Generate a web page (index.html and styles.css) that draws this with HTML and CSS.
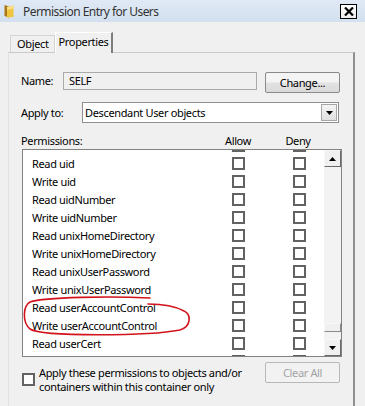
FILE: index.html
```html
<!DOCTYPE html>
<html lang="en">
<head>
  <meta charset="UTF-8" />
  <title>Permission Entry for Users</title>
  <link rel="stylesheet" href="styles.css">
</head>
<body>

  <div class="dialog">

    <div class="title-bar">
      <svg class="folder" width="10" height="14" viewBox="0 0 10 14">
        <path d="M0.5 1 L5 2.5 L5 13.5 L0.5 12 Z" fill="#a9761a"/>
        <path d="M3 3 L9.5 1.5 L9.5 13 L3 13.5 Z" fill="#f0c540"/>
        <path d="M3 3 L9.5 1.5 L9.5 4.5 L3 6 Z" fill="#fbe08a"/>
      </svg>
      <div class="title">Permission Entry for Users</div>
      <div class="close">
        <svg width="10" height="9" viewBox="0 0 10 9">
          <path d="M1 0.5 L9 8.5 M9 0.5 L1 8.5" stroke="#000" stroke-width="2.2"/>
        </svg>
      </div>
    </div>

    <div class="tab-bar">
      <div class="tab">Object</div>
      <div class="tab active">Properties</div>
    </div>

    <div class="panel">

      <div class="field-row">
        <div class="label name-label">Name:</div>
        <div class="textbox">SELF</div>
        <div class="button">Change...</div>
      </div>

      <div class="field-row apply-row">
        <div class="label apply-label">Apply to:</div>
        <div class="combo">
          <span>Descendant User objects</span>
          <span class="combo-btn">
            <svg width="7" height="4" viewBox="0 0 7 4"><path d="M0 0 H7 L3.5 4 Z" fill="#000"/></svg>
          </span>
        </div>
      </div>

      <div class="perm-head">
        <span>Permissions:</span>
        <span class="col-head">Allow</span>
        <span></span>
        <span class="col-head">Deny</span>
      </div>

      <div class="list">
        <div class="rows">
          <div class="rows-inner">
            <div class="perm-row"><span></span><span class="cb"></span><span></span><span class="cb"></span></div>
            <div class="perm-row"><span>Read uid</span><span class="cb"></span><span></span><span class="cb"></span></div>
            <div class="perm-row"><span>Write uid</span><span class="cb"></span><span></span><span class="cb"></span></div>
            <div class="perm-row"><span>Read uidNumber</span><span class="cb"></span><span></span><span class="cb"></span></div>
            <div class="perm-row"><span>Write uidNumber</span><span class="cb"></span><span></span><span class="cb"></span></div>
            <div class="perm-row"><span>Read unixHomeDirectory</span><span class="cb"></span><span></span><span class="cb"></span></div>
            <div class="perm-row"><span>Write unixHomeDirectory</span><span class="cb"></span><span></span><span class="cb"></span></div>
            <div class="perm-row"><span>Read unixUserPassword</span><span class="cb"></span><span></span><span class="cb"></span></div>
            <div class="perm-row"><span>Write unixUserPassword</span><span class="cb"></span><span></span><span class="cb"></span></div>
            <div class="perm-row"><span>Read userAccountControl</span><span class="cb"></span><span></span><span class="cb"></span></div>
            <div class="perm-row"><span>Write userAccountControl</span><span class="cb"></span><span></span><span class="cb"></span></div>
            <div class="perm-row"><span>Read userCert</span><span class="cb"></span><span></span><span class="cb"></span></div>
            <div class="perm-row"><span></span><span class="cb"></span><span></span><span class="cb"></span></div>
          </div>
        </div>
        <div class="scrollbar">
          <div class="sb-btn">
            <svg width="7" height="4" viewBox="0 0 7 4"><path d="M0 4 H7 L3.5 0 Z" fill="#000"/></svg>
          </div>
          <div class="sb-track"><div class="sb-thumb"></div></div>
          <div class="sb-btn">
            <svg width="7" height="4" viewBox="0 0 7 4"><path d="M0 0 H7 L3.5 4 Z" fill="#000"/></svg>
          </div>
        </div>
      </div>

      <div class="bottom-row">
        <span class="cb apply-cb"></span>
        <div class="apply-text">Apply these permissions to objects and/or<br>containers within this container only</div>
        <div class="button disabled">Clear All</div>
      </div>

    </div>
  </div>

  <!-- red pen mark over the screenshot -->
  <svg class="scribble" width="365" height="406" viewBox="0 0 365 406">
    <path d="M150 298 C 110 296, 45 297, 30 302 C 23 306, 22 322, 30 329 C 42 337, 150 336, 180 330 C 192 326, 191 314, 184 311 C 175 306, 160 304, 148 304"
          fill="none" stroke="#d3131b" stroke-width="1.6" stroke-linecap="round"/>
  </svg>

</body>
</html>
```

FILE: styles.css
```css
* {
  box-sizing: border-box;
}

body {
  margin: 0;
  height: 100vh;
  background-color: #f0f0f0;
  font-family: 'Noto Sans', sans-serif;
  font-size: 11px;
  letter-spacing: -0.35px;
  color: #000;
  overflow: hidden;
}

.dialog {
  padding: 0 10px 0 8px;
}

.title-bar {
  height: 22px;
  margin: 0 -10px 0 -8px;
  padding: 0 8px 0 4px;
  display: flex;
  align-items: center;
  background: linear-gradient(#e0e9f5, #d3e0ef);
}

.folder {
  flex: none;
}

.title {
  margin-left: 9px;
  font-size: 12px;
  letter-spacing: -0.55px;
  color: #333;
  flex: 1;
}

.close {
  width: 17px;
  height: 15px;
  border: 1px solid #000;
  background: linear-gradient(#ffffff, #ececec);
  display: flex;
  align-items: center;
  justify-content: center;
}

.tab-bar {
  display: flex;
  align-items: flex-end;
  margin-top: 10px;
  padding-left: 2px;
  height: 20px;
}

.tab {
  height: 17px;
  padding: 0 5px 0 6px;
  line-height: 16px;
  border: 1px solid #d4d4d4;
  border-bottom: none;
}

.tab.active {
  height: 21px;
  margin-bottom: -1px;
  padding: 0 2px 0 3px;
  line-height: 18px;
  background-color: #f0f0f0;
  border-color: #ffffff #7d7d7d #ffffff #ffffff;
  border-right-width: 2px;
  position: relative;
  z-index: 1;
}

.panel {
  border-top: 1px solid #c9c9c9;
  border-left: 1px solid #e2e2e2;
  border-right: 2px solid #8f8f8f;
  padding: 19px 13px 20px 12px;
  height: 360px;
}

.field-row {
  display: flex;
  align-items: flex-start;
}

.label {
  line-height: 18px;
}

.name-label {
  width: 42px;
}

.textbox {
  width: 194px;
  height: 18px;
  border: 1px solid #aaaaaa;
  background-color: #f0f0f0;
  padding-left: 5px;
  line-height: 16px;
}

.button {
  width: 75px;
  height: 21px;
  margin-left: auto;
  border: 1px solid #8a8a8a;
  border-radius: 2px;
  background: linear-gradient(#f4f4f4 45%, #e2e2e2 55%, #dadada);
  text-align: center;
  line-height: 19px;
}

.button.disabled {
  color: #a3a3a3;
  border-color: #b8b8b8;
  background: #f2f2f2;
}

.apply-row {
  margin-top: 9px;
}

.apply-label {
  width: 61px;
  line-height: 21px;
}

.combo {
  width: 257px;
  height: 21px;
  border: 1px solid #8f8f8f;
  background-color: #fff;
  display: flex;
  align-items: center;
  padding: 0 1px 0 2px;
}

.combo span:first-child {
  flex: 1;
}

.combo-btn {
  width: 16px;
  height: 17px;
  background: linear-gradient(#f4f4f4, #e0e0e0);
  border: 1px solid #a7a7a7;
  display: flex;
  align-items: center;
  justify-content: center;
}

.perm-head {
  margin-top: 10px;
  display: grid;
  grid-template-columns: 197px 40px 20px 40px;
  line-height: 16px;
}

.col-head {
  text-align: center;
}

.list {
  width: 320px;
  height: 208px;
  margin-left: 1px;
  border: 1px solid #828282;
  background-color: #fff;
  display: flex;
}

.rows {
  flex: 1;
  overflow: hidden;
}

/* scrolled down: the first row is mostly out of view */
.rows-inner {
  margin-top: -14px;
}

.perm-row {
  display: grid;
  grid-template-columns: 200px 13px 48px 13px;
  align-items: center;
  height: 18px;
  padding-left: 9px;
  white-space: nowrap;
}

.cb {
  display: block;
  width: 13px;
  height: 13px;
  border: 2px solid #626262;
  background-color: #fff;
}

.scrollbar {
  width: 17px;
  display: flex;
  flex-direction: column;
  background-color: #f3f3f3;
}

.sb-btn {
  height: 17px;
  border: 1px solid;
  border-color: #f8f8f8 #6a6a6a #6a6a6a #f8f8f8;
  background-color: #f0f0f0;
  display: flex;
  align-items: center;
  justify-content: center;
}

.sb-track {
  flex: 1;
  display: flex;
  flex-direction: column;
  justify-content: flex-end;
  padding-bottom: 7px;
}

.sb-thumb {
  height: 9px;
  border: 1px solid;
  border-color: #f8f8f8 #8a8a8a #8a8a8a #f8f8f8;
  background-color: #f0f0f0;
}

.bottom-row {
  margin-top: 5px;
  display: flex;
  align-items: flex-start;
}

.apply-cb {
  margin: 11px 0 0 1px;
  background-color: #fdfdfd;
}

.apply-text {
  margin: 4px 0 0 4px;
  line-height: 14px;
}

.scribble {
  position: absolute;
  left: 0;
  top: 0;
  pointer-events: none;
}
```
